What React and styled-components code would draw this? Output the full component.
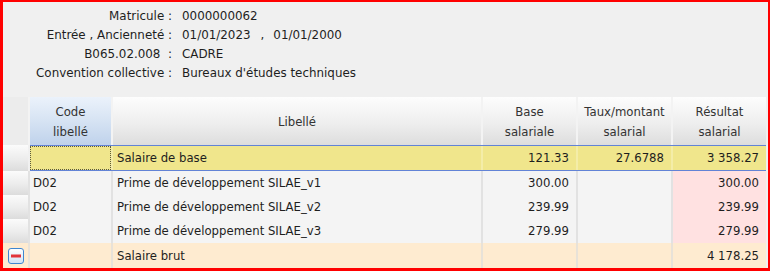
import React from "react";
import styled, { createGlobalStyle } from "styled-components";

const GlobalStyle = createGlobalStyle`
  html, body {
    margin: 0;
    padding: 0;
    background: #ffffff;
  }
  * {
    box-sizing: border-box;
  }
`;

const COLS = "81px 368px 93px 93px 93px";

const Frame = styled.div`
  width: 770px;
  height: 271px;
  border: 2px solid #ff0000;
  border-left-width: 3px;
  border-bottom-width: 3px;
  background: #f0f0f0;
  font-family: "DejaVu Sans", Verdana, sans-serif;
  font-size: 11.7px;
  color: #1e1e1e;
  display: flex;
  flex-direction: column;
  overflow: hidden;
`;

const Info = styled.div`
  height: 95px;
  padding-top: 5px;
  display: grid;
  grid-template-columns: 169px 1fr;
  column-gap: 10px;
  grid-auto-rows: 19px;
  line-height: 19px;
  font-size: 11.9px;
`;

const Label = styled.div`
  text-align: right;
  white-space: pre;
`;

const Value = styled.div`
  white-space: pre;
`;

const Sep = styled.span`
  padding: 0 9px 0 10px;
`;

const Table = styled.div`
  display: flex;
  flex-direction: column;
  width: 763px;
`;

const Row = styled.div`
  display: flex;
  column-gap: 2px;
  height: ${(p) => p.$height || 24}px;
  background: ${(p) => p.$gap || "#e2e2e2"};
`;

const Selector = styled.div`
  width: 25px;
  flex: none;
  display: flex;
  align-items: center;
  justify-content: center;
  background: ${(p) =>
    p.$flat || "linear-gradient(to bottom, #fbfbfb 0%, #ececec 55%, #dcdcdc 100%)"};
`;

const Cells = styled.div`
  flex: 1;
  display: grid;
  grid-template-columns: ${COLS};
  column-gap: 2px;
  background: ${(p) => p.$gap || "#e2e2e2"};
  border-top: ${(p) => (p.$selected ? "1px solid #6283d6" : "none")};
  border-bottom: ${(p) => (p.$selected ? "1px solid #6283d6" : "none")};
`;

const HeadCell = styled.div`
  display: flex;
  align-items: center;
  justify-content: center;
  text-align: center;
  line-height: 20px;
  padding-top: 1px;
  color: #333333;
  background: ${(p) =>
    p.$sorted
      ? "linear-gradient(to bottom, #ebf2fb 0%, #d6e3f3 50%, #bfd2eb 100%)"
      : "linear-gradient(to bottom, #fdfdfd 0%, #eeeeee 55%, #dddddd 100%)"};
`;

const Cell = styled.div`
  display: flex;
  align-items: center;
  justify-content: ${(p) => (p.$num ? "flex-end" : "flex-start")};
  padding: ${(p) => (p.$num ? "0 7px 0 0" : "0 0 0 4px")};
  background: ${(p) => p.$bg};
  white-space: pre;
  border: ${(p) => (p.$focus ? "1px dotted #5c5a3c" : "none")};
  padding-left: ${(p) => (p.$code ? "3px" : undefined)};
`;

const Minus = () => (
  <svg width="16" height="16" viewBox="0 0 16 16">
    <defs>
      <linearGradient id="mg" x1="0" y1="0" x2="0" y2="1">
        <stop offset="0" stopColor="#ffffff" />
        <stop offset="1" stopColor="#cfe2f6" />
      </linearGradient>
    </defs>
    <rect x="0.5" y="0.5" width="15" height="15" rx="2.5" fill="url(#mg)" stroke="#3f86cf" />
    <rect x="3" y="6.5" width="10" height="3" fill="#e2343b" />
  </svg>
);

const info = [
  ["Matricule :", "0000000062"],
  ["Entrée , Ancienneté :", null],
  ["B065.02.008  :", "CADRE"],
  ["Convention collective :", "Bureaux d'études techniques"],
];

const primes = [
  ["D02", "Prime de développement SILAE_v1", "300.00"],
  ["D02", "Prime de développement SILAE_v2", "239.99"],
  ["D02", "Prime de développement SILAE_v3", "279.99"],
];

const YELLOW = "#f0e68c";
const GREY = "#f4f4f4";
const PINK = "#ffe1e1";
const PEACH = "#feebd0";

export default function App() {
  return (
    <>
      <GlobalStyle />
      <Frame>
        <Info>
          {info.map(([label, value]) => (
            <React.Fragment key={label}>
              <Label>{label}</Label>
              <Value>
                {value ?? (
                  <>
                    01/01/2023
                    <Sep>,</Sep>
                    01/01/2000
                  </>
                )}
              </Value>
            </React.Fragment>
          ))}
        </Info>

        <Table>
          <Row $height={48} $gap="#f3f3f3">
            <Selector $flat="#ececec" />
            <Cells $gap="#f3f3f3">
              <HeadCell $sorted>
                Code
                <br />
                libellé
              </HeadCell>
              <HeadCell>Libellé</HeadCell>
              <HeadCell>
                Base
                <br />
                salariale
              </HeadCell>
              <HeadCell>
                Taux/montant
                <br />
                salarial
              </HeadCell>
              <HeadCell>
                Résultat
                <br />
                salarial
              </HeadCell>
            </Cells>
          </Row>

          <Row $height={26} $gap="#f0f0f0">
            <Selector />
            <Cells $selected $gap="#f4eda8">
              <Cell $bg={YELLOW} $focus />
              <Cell $bg={YELLOW}>Salaire de base</Cell>
              <Cell $bg={YELLOW} $num>121.33</Cell>
              <Cell $bg={YELLOW} $num>27.6788</Cell>
              <Cell $bg={YELLOW} $num>3 358.27</Cell>
            </Cells>
          </Row>

          {primes.map(([code, label, amount]) => (
            <Row key={label}>
              <Selector />
              <Cells>
                <Cell $bg={GREY} $code>{code}</Cell>
                <Cell $bg={GREY}>{label}</Cell>
                <Cell $bg={GREY} $num>{amount}</Cell>
                <Cell $bg={GREY} />
                <Cell $bg={PINK} $num>{amount}</Cell>
              </Cells>
            </Row>
          ))}

          <Row $height={25} $gap="#e8e2d8">
            <Selector $flat={PEACH}>
              <Minus />
            </Selector>
            <Cells $gap="#e8e2d8">
              <Cell $bg={PEACH} />
              <Cell $bg={PEACH}>Salaire brut</Cell>
              <Cell $bg={PEACH} />
              <Cell $bg={PEACH} />
              <Cell $bg={PEACH} $num>4 178.25</Cell>
            </Cells>
          </Row>
        </Table>
      </Frame>
    </>
  );
}
